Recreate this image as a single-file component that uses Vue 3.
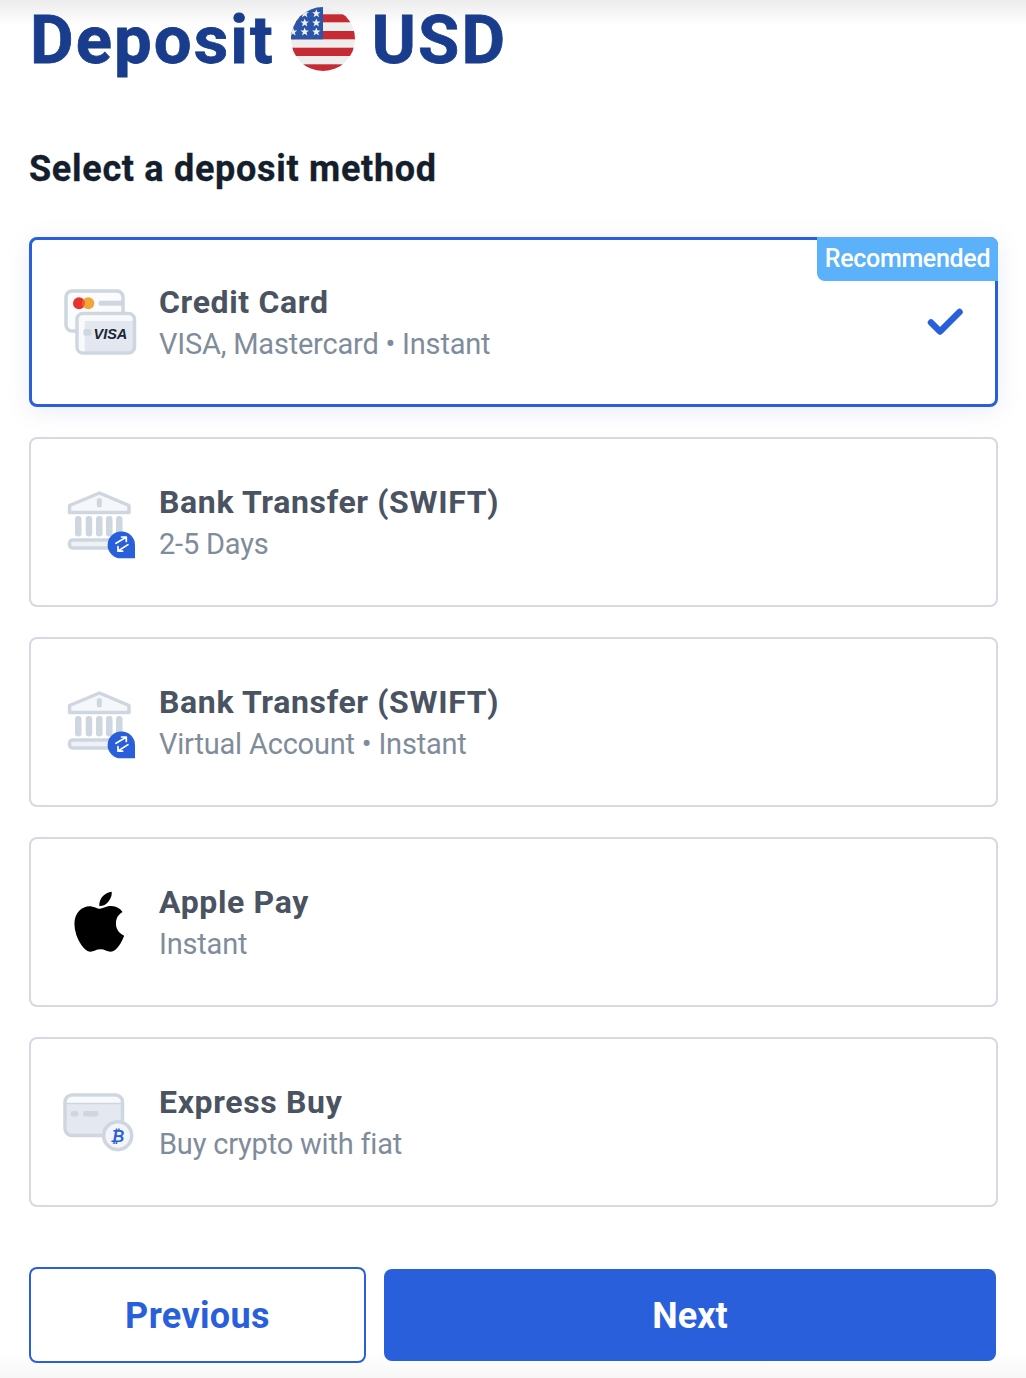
<template>
  <div class="page">
    <h1 class="title">
      <span>Deposit</span>
      <svg class="flag" width="64" height="64" viewBox="0 0 64 64">
        <defs>
          <clipPath id="flag-clip"><circle cx="32" cy="32" r="32" /></clipPath>
          <polygon id="star" points="0,-4.4 1.2,-1.4 4.2,-1.4 1.8,0.5 2.7,3.6 0,1.8 -2.7,3.6 -1.8,0.5 -4.2,-1.4 -1.2,-1.4" />
        </defs>
        <g clip-path="url(#flag-clip)">
          <rect width="64" height="64" fill="#eeeeee" />
          <rect y="7.3" width="64" height="8" fill="#c62b33" />
          <rect y="24" width="64" height="8.3" fill="#c62b33" />
          <rect y="40.7" width="64" height="8.3" fill="#c62b33" />
          <rect y="57.3" width="64" height="7" fill="#c62b33" />
          <rect width="32" height="32.3" fill="#2b55a6" />
          <g fill="#eef1f7">
            <use v-for="s in stars" :key="s.join()" href="#star" :x="s[0]" :y="s[1]" />
          </g>
        </g>
      </svg>
      <span>USD</span>
    </h1>

    <h2 class="subtitle">Select a deposit method</h2>

    <div class="methods">
      <div
        v-for="m in methods"
        :key="m.id"
        class="method"
        :class="{ selected: m.id === selected }"
      >
        <span v-if="m.badge" class="badge">{{ m.badge }}</span>

        <svg class="icon" width="100" height="90" viewBox="0 0 100 90">
          <g v-if="m.icon === 'card'">
            <rect x="16" y="14" width="57" height="40" rx="6" fill="#fbfcfd" stroke="#ced6e0" stroke-width="3.5" />
            <circle cx="29" cy="26.3" r="6" fill="#e5352d" />
            <circle cx="38.3" cy="26.3" r="6" fill="#f2a53a" />
            <path d="M33.6 22.6a6 6 0 0 1 0 7.4a6 6 0 0 1 0-7.4z" fill="#e5601f" />
            <line x1="51" y1="26.3" x2="72" y2="26.3" stroke="#ced6e0" stroke-width="5" stroke-linecap="round" />
            <rect x="27" y="36.5" width="57.5" height="39.5" rx="6" fill="#e3e8f0" stroke="#ced6e0" stroke-width="3.5" />
            <path d="M28.8 44V42a3.8 3.8 0 0 1 3.8-3.8h46.2a3.8 3.8 0 0 1 3.8 3.8v2z" fill="#f8f9fb" />
            <path d="M28.8 44h6v30.2h-2.2a3.8 3.8 0 0 1-3.8-3.8z" fill="#f8f9fb" />
            <rect x="33.5" y="52" width="8" height="6.5" rx="1.5" fill="#ced6e0" />
            <text x="43.5" y="62" class="visa">VISA</text>
          </g>

          <g v-else-if="m.icon === 'bank'">
            <path d="M19.5 28.5 49.5 16 79 28.5v7H19.5z" fill="#f6f7fa" stroke="#ced6e0" stroke-width="3.5" stroke-linejoin="round" />
            <rect x="46.8" y="21" width="5" height="9.5" rx="2.5" fill="#ced6e0" />
            <g fill="#ced6e0">
              <rect x="25" y="39" width="6.5" height="20.5" rx="3" />
              <rect x="35.7" y="39" width="6.5" height="20.5" rx="3" />
              <rect x="46" y="39" width="6.5" height="20.5" rx="3" />
              <rect x="56" y="39" width="6.5" height="20.5" rx="3" />
              <rect x="66" y="39" width="6.5" height="20.5" rx="3" />
            </g>
            <rect x="19.5" y="63" width="56" height="8" rx="3" fill="#eef1f5" stroke="#ced6e0" stroke-width="3.5" />
            <path d="M71 54.5a13.4 13.4 0 0 1 14 13.4V81.3H71a13.4 13.4 0 0 1 0-26.8z" fill="#2a5fdc" />
            <g fill="none" stroke="#fff" stroke-width="1.7" stroke-linecap="round" stroke-linejoin="round">
              <path d="M66 66.3 76 60.3M71.5 60H76.3V64.5" />
              <path d="M68 74 78 67.6M68 69.6V74.2H72.6" />
            </g>
          </g>

          <path
            v-else-if="m.icon === 'apple'"
            transform="translate(23.9 10.4) scale(.132 .134)"
            fill="#000"
            d="M318.7 268.7c-.2-36.7 16.4-64.4 50-84.8-18.8-26.9-47.2-41.7-84.7-44.6-35.5-2.8-74.3 20.7-88.5 20.7-15 0-49.4-19.7-76.4-19.7C63.3 141.2 4 184.8 4 273.5q0 39.3 14.4 81.2c12.8 36.7 59 126.7 107.2 125.2 25.2-.6 43-17.9 75.8-17.9 31.8 0 48.3 17.9 76.4 17.9 48.6-.7 90.4-82.5 102.6-119.3-65.2-30.7-61.7-90-61.7-91.9zm-56.6-164.2c27.3-32.4 24.8-61.9 24-72.5-24.1 1.4-52 16.4-67.9 34.9-17.5 19.8-27.8 44.3-25.6 71.9 26.1 2 49.9-11.4 69.5-34.3z"
          />

          <g v-else>
            <rect x="15" y="18" width="57.5" height="40.5" rx="7" fill="#e4e9f1" stroke="#ced6e0" stroke-width="3.5" />
            <path d="M16.8 26v-1a5.2 5.2 0 0 1 5.2-5.2h43.5a5.2 5.2 0 0 1 5.2 5.2v1z" fill="#f8f9fb" />
            <line x1="15" y1="26.5" x2="72" y2="26.5" stroke="#ced6e0" stroke-width="1.5" />
            <rect x="20.5" y="34" width="8" height="5.5" rx="2.7" fill="#ced6e0" />
            <rect x="33" y="34" width="15.5" height="5.5" rx="2.7" fill="#ced6e0" />
            <circle cx="67.7" cy="58.7" r="14" fill="#f3f5f8" stroke="#ced6e0" stroke-width="3.5" />
            <text x="67.2" y="64.5" class="btc">₿</text>
          </g>
        </svg>

        <div class="method-text">
          <div class="method-name">{{ m.name }}</div>
          <div class="method-desc">{{ m.desc }}</div>
        </div>

        <svg v-if="m.id === selected" class="check" width="36" height="28" viewBox="0 0 36 28">
          <path d="M4 14.5 13 23.5 32.5 4" fill="none" stroke="#2a5fdc" stroke-width="6.5" stroke-linecap="round" stroke-linejoin="round" />
        </svg>
      </div>
    </div>

    <div class="actions">
      <button class="btn btn-prev" type="button">Previous</button>
      <button class="btn btn-next" type="button">Next</button>
    </div>
  </div>
</template>

<script setup>
import { ref } from 'vue'

const selected = ref('card')

const stars = [
  [25.3, 6.6], [13.7, 6.6], [25.3, 16], [13.7, 16], [25.3, 25], [13.7, 25], [2, 25],
]

const methods = [
  { id: 'card', icon: 'card', name: 'Credit Card', desc: 'VISA, Mastercard • Instant', badge: 'Recommended' },
  { id: 'swift', icon: 'bank', name: 'Bank Transfer (SWIFT)', desc: '2-5 Days' },
  { id: 'virtual', icon: 'bank', name: 'Bank Transfer (SWIFT)', desc: 'Virtual Account • Instant' },
  { id: 'apple', icon: 'apple', name: 'Apple Pay', desc: 'Instant' },
  { id: 'express', icon: 'express', name: 'Express Buy', desc: 'Buy crypto with fiat' },
]
</script>

<style scoped>
.page {
  box-sizing: border-box;
  height: 1378px;
  padding: 0 28px 0 29px;
  overflow: hidden;
  font-family: Roboto, "Liberation Sans", sans-serif;
  background:
    linear-gradient(to bottom, #ececec 0, #ffffff 26px, #ffffff 1352px, #f7f7f7 1378px);
}

.title {
  display: flex;
  align-items: center;
  gap: 16px;
  height: 78px;
  margin: 0;
  padding-left: 1px;
  font-size: 67px;
  font-weight: 700;
  line-height: 78px;
  letter-spacing: 2.1px;
  -webkit-text-stroke: 0.8px #193d8c;
  color: #193d8c;
}

.title span {
  position: relative;
  top: 1px;
}

.flag {
  flex: none;
  margin-right: 1px;
}

.subtitle {
  margin: 71px 0 0;
  font-size: 36px;
  font-weight: 700;
  line-height: 40px;
  letter-spacing: 0.7px;
  -webkit-text-stroke: 0.3px #141e2c;
  color: #141e2c;
}

.methods {
  display: flex;
  flex-direction: column;
  gap: 30px;
  margin-top: 48px;
}

.method {
  position: relative;
  box-sizing: border-box;
  display: flex;
  align-items: center;
  height: 170px;
  padding-left: 19px;
  background: #fff;
  border: 2px solid #d3dae3;
  border-radius: 8px;
}

.method.selected {
  padding-left: 18px;
  border: 3px solid #2a5fdc;
  box-shadow: 0 4px 24px rgba(90, 110, 180, 0.12);
}

.badge {
  position: absolute;
  top: -3px;
  right: -3px;
  box-sizing: border-box;
  width: 181px;
  height: 44px;
  font-size: 25px;
  font-weight: 500;
  line-height: 44px;
  letter-spacing: -0.3px;
  text-align: center;
  color: #fff;
  background: #5cb1fb;
  border-radius: 0 8px 0 8px;
}

.icon {
  flex: none;
  margin-right: 9px;
}

.visa {
  font-family: "Liberation Sans", sans-serif;
  font-size: 14.5px;
  font-weight: 700;
  font-style: italic;
  fill: #1a2433;
}

.btc {
  font-family: "DejaVu Sans", sans-serif;
  font-size: 16px;
  font-weight: 700;
  font-style: italic;
  text-anchor: middle;
  fill: #2a5fdc;
}

.method-text {
  display: flex;
  flex-direction: column;
  gap: 2px;
  margin-top: 2px;
}

.method-name {
  font-size: 32px;
  font-weight: 700;
  line-height: 40px;
  letter-spacing: 0.65px;
  color: #4a5361;
}

.method-desc {
  font-size: 29px;
  line-height: 40px;
  letter-spacing: -0.2px;
  color: #7f8c9b;
}

.check {
  margin-left: auto;
  margin-right: 32px;
}

.actions {
  display: flex;
  align-items: center;
  gap: 18px;
  margin-top: 60px;
  padding-right: 2px;
}

.btn {
  box-sizing: border-box;
  padding: 2px 0 0;
  font-family: inherit;
  font-size: 36px;
  font-weight: 700;
  border-radius: 8px;
  cursor: pointer;
}

.btn-prev {
  flex: none;
  width: 337px;
  height: 96px;
  letter-spacing: 0.35px;
  color: #2a5fdc;
  background: #fff;
  border: 2px solid #2a5fdc;
}

.btn-next {
  flex: 1;
  height: 92px;
  color: #fff;
  background: #2a5fdc;
  border: none;
}
</style>
